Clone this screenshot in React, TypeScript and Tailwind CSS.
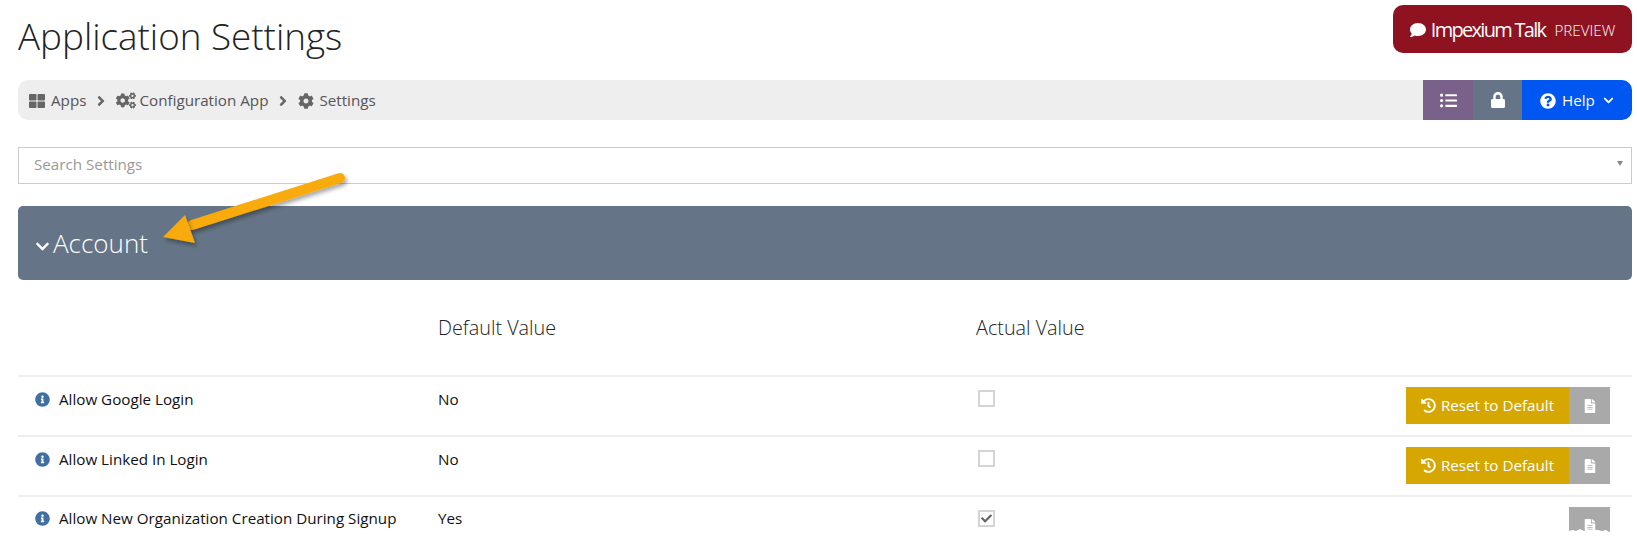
import { FaAngleRight, FaCheck, FaChevronDown, FaCog, FaCogs, FaComment, FaFileAlt, FaHistory, FaInfoCircle, FaListUl, FaLock, FaQuestionCircle, FaThLarge } from 'react-icons/fa';

const rows = [
    { label: 'Allow Google Login', value: 'No', checked: false, reset: true },
    { label: 'Allow Linked In Login', value: 'No', checked: false, reset: true },
    { label: 'Allow New Organization Creation During Signup', value: 'Yes', checked: true, reset: false },
];

function Row({ row, last }: { row: typeof rows[number]; last: boolean }) {
    return (
        <div className={`flex border-t-2 border-[#eeeeee] pl-[17px] ${last ? 'h-[37px] overflow-hidden' : 'h-[60px]'}`}>
            <div className={`flex w-[403px] items-center ${last ? 'h-[43px]' : 'h-[45px]'}`}>
                <FaInfoCircle className="mr-[9px] h-[15px] w-[15px] text-[#3f6fa3]" />
                <span className="text-[15.2px] text-[#111111]">{row.label}</span>
            </div>
            <div className={`flex w-[540px] items-center text-[15.2px] text-[#111111] ${last ? 'h-[43px]' : 'h-[45px]'}`}>{row.value}</div>
            <div className="flex h-[43px] items-center">
                <span className="flex h-[17px] w-[17px] items-center justify-center border-2 border-[#d4d4d4] bg-white">
                    {row.checked && <FaCheck className="h-[11px] w-[11px] text-[#666666]" />}
                </span>
            </div>
            <div className="mt-[10px] mr-[22px] ml-auto flex h-[37px]">
                {row.reset && (
                    <button className="flex h-[37px] w-[163px] items-center justify-center gap-[5px] bg-[#d6a700] text-[15.2px] text-white">
                        <FaHistory className="h-[15px] w-[15px]" />
                        Reset to Default
                    </button>
                )}
                <button className="flex h-[37px] w-[41px] items-center justify-center bg-[#a9a9a9] text-white">
                    <FaFileAlt className="h-[14px] w-[12px]" />
                </button>
            </div>
        </div>
    );
}

export default function App() {
    return (
        <div className="relative h-[557px] overflow-hidden bg-white px-[18px] pr-[5px] font-['Open_Sans',sans-serif]">
            <div className="flex h-[80px] items-start justify-between">
                <h1 className="mt-[9px] text-[36.8px] leading-[54px] font-light text-[#222222]">Application Settings</h1>
                <button className="mt-[5px] flex h-[48px] w-[239px] items-center justify-center rounded-[10px] bg-[#8e1220] pt-[2px] text-white">
                    <FaComment className="mr-[5px] h-[16px] w-[16px]" />
                    <span className="text-[20px] tracking-[-1.7px]">Impexium Talk</span>
                    <span className="ml-[9px] text-[15.2px] font-light">PREVIEW</span>
                </button>
            </div>

            <div className="flex h-[40px] items-stretch overflow-hidden rounded-[10px] bg-[#eeeeee]">
                <div className="flex flex-1 items-center pt-[1px] pl-[11px] text-[15.2px] text-[#555555]">
                    <FaThLarge className="mr-[6px] h-[16px] w-[16px] text-[#666666]" />
                    Apps
                    <FaAngleRight className="mx-[7px] h-[16px] w-[16px] text-[#666666]" />
                    <FaCogs className="mr-[3px] h-[17px] w-[20px] text-[#666666]" />
                    Configuration App
                    <FaAngleRight className="mx-[7px] h-[16px] w-[16px] text-[#666666]" />
                    <FaCog className="mr-[5px] h-[16px] w-[16px] text-[#666666]" />
                    Settings
                </div>
                <button className="flex w-[50px] items-center justify-center bg-[#7a6189] text-white"><FaListUl className="h-[17px] w-[17px]" /></button>
                <button className="flex w-[49px] items-center justify-center bg-[#657587] text-white"><FaLock className="h-[16px] w-[16px]" /></button>
                <button className="flex w-[110px] items-center justify-center gap-[6px] bg-[#0056f0] pt-[1px] text-[15.2px] text-white">
                    <FaQuestionCircle className="h-[16px] w-[16px]" />
                    Help
                    <FaChevronDown className="ml-[2px] h-[11px] w-[11px]" />
                </button>
            </div>

            <div className="relative mt-[27px] flex h-[37px] items-center border border-[#cccccc] pb-[2px] pl-[15px] text-[15.2px] text-[#999999]">
                Search Settings
                <span className="absolute top-[13px] right-[8px] h-0 w-0 border-x-[3px] border-t-[5px] border-x-transparent border-t-[#888888]" />
            </div>

            <div className="mt-[22px] flex h-[74px] items-center rounded-[5px] bg-[#657587] pl-[17px] text-white">
                <FaChevronDown className="mt-[7px] mr-[3px] h-[15px] w-[15px]" />
                <span className="text-[26px] font-light">Account</span>
            </div>

            <div className="flex h-[95px] pl-[420px] text-[19.8px] font-light text-[#222222]">
                <span className="mt-[33px] w-[538px]">Default Value</span>
                <span className="mt-[33px]">Actual Value</span>
            </div>

            {rows.map((row, i) => <Row key={row.label} row={row} last={i === rows.length - 1} />)}

            {/* callout arrow added on top of the screenshot */}
            <svg className="absolute top-0 left-0 h-[557px] w-[1637px]" viewBox="0 0 1637 557">
                <defs>
                    <filter id="arrowShadow" x="-20%" y="-20%" width="140%" height="140%">
                        <feDropShadow dx="2" dy="3" stdDeviation="2" floodColor="#000000" floodOpacity="0.35" />
                    </filter>
                </defs>
                <path d="M340 178 L192 225" stroke="#f9ab07" strokeWidth="10" strokeLinecap="round" filter="url(#arrowShadow)" />
                <path d="M163 237 L185 215 L195 243 Z" fill="#f9ab07" filter="url(#arrowShadow)" />
                {/* torn lower edge of the cut-off button */}
                <path d="M1568 533 L1568 531 L1573 530 L1576 531 L1580 529 L1584 531 L1589 531 L1593 530 L1598 530 L1602 531 L1606 530 L1609 532 L1611 531 L1611 533 Z" fill="#ffffff" />
            </svg>
        </div>
    );
}
